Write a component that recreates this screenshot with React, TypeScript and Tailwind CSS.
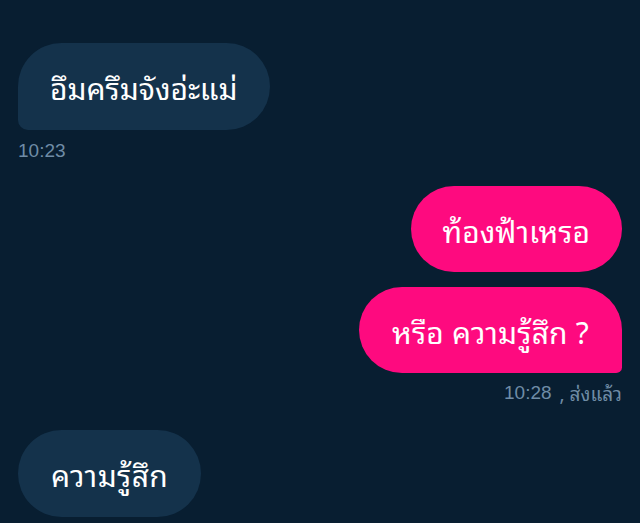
import React from 'react'

const thai = { fontFamily: '"Noto Sans Thai Looped", "Noto Sans", sans-serif' }
const latin = { fontFamily: '"Liberation Sans", Arial, sans-serif' }

const App = () => {
  return (
    <div className="w-[640px] h-[523px] overflow-hidden bg-[#081e31] px-[18px] pt-[43px]" style={thai}>
      <div className="flex flex-col">
        <div className="flex">
          <div className="h-[87px] flex items-center px-[32px] bg-[#14324b] text-white text-[30px] rounded-[44px] rounded-bl-[10px]">
            อึมครึมจังอ่ะแม่
          </div>
        </div>
        <div className="h-[42px] flex items-center text-[19px] text-[#6f8ca6]" style={latin}>10:23</div>

        <div className="flex justify-end mt-[14px]">
          <div className="h-[86px] flex items-center px-[32px] bg-[#fe0a7f] text-white text-[30px] rounded-[44px]">
            ท้องฟ้าเหรอ
          </div>
        </div>
        <div className="flex justify-end mt-[15px]">
          <div className="h-[86px] flex items-center px-[33px] bg-[#fe0a7f] text-white text-[30px] tracking-[0.2px] rounded-[44px] rounded-br-[6px]">
            หรือ ความรู้สึก ?
          </div>
        </div>
        <div className="h-[40px] flex items-center justify-end text-[19px] text-[#6f8ca6]">
          <span style={latin}>10:28</span>
          <span className="ml-[8px]">, ส่งแล้ว</span>
        </div>

        <div className="flex mt-[17px]">
          <div className="h-[87px] flex items-center px-[33px] bg-[#14324b] text-white text-[30px] tracking-[0.4px] rounded-[44px]">
            ความรู้สึก
          </div>
        </div>
      </div>
    </div>
  )
}

export default App
